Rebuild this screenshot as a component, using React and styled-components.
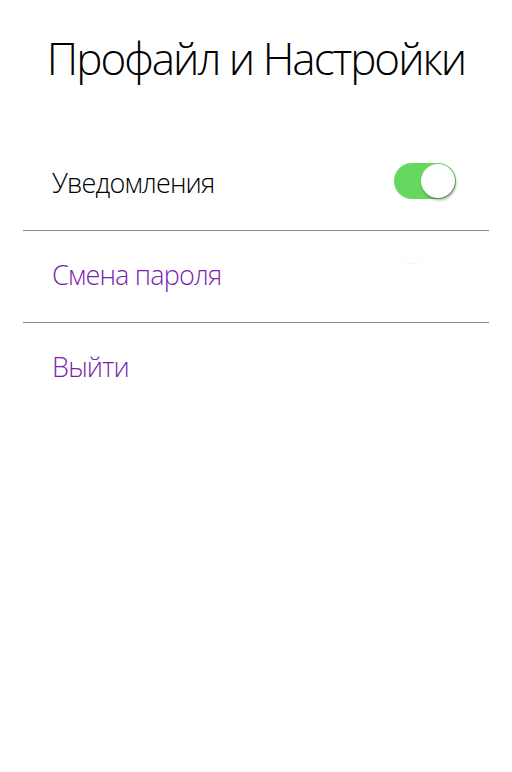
import React, { useState } from "react";
import styled, { createGlobalStyle } from "styled-components";

const Global = createGlobalStyle`
  html, body {
    margin: 0;
    padding: 0;
    background: #fff;
  }
  body {
    font-family: "Open Sans", "Noto Sans", sans-serif;
    font-weight: 300;
  }
`;

const Page = styled.div`
  width: 512px;
  min-height: 772px;
  background: #fff;
  box-sizing: border-box;
  padding: 28px 23px 0;
`;

const Title = styled.h1`
  margin: 0;
  text-align: center;
  font-size: 44px;
  font-weight: 300;
  letter-spacing: -2px;
  color: #000;
  line-height: 60px;
`;

const List = styled.div`
  margin-top: 51px;
  display: flex;
  flex-direction: column;
`;

const Row = styled.div`
  position: relative;
  height: 92px;
  display: flex;
  align-items: center;
  justify-content: space-between;
  padding: 0 33px 8px 29px;
  border-bottom: ${(p) => (p.$last ? "none" : "1px solid #8a8a8a")};
  box-sizing: border-box;
`;

const Label = styled.span`
  padding-top: 3px;
  font-size: 27px;
  font-weight: 300;
  letter-spacing: -0.8px;
  color: ${(p) => (p.$accent ? "#7b1fae" : "#000")};
  cursor: ${(p) => (p.$accent ? "pointer" : "default")};
`;

const Track = styled.button`
  position: relative;
  width: 62px;
  height: 36px;
  border: none;
  padding: 0;
  border-radius: 18px;
  background: ${(p) => (p.$on ? "#67d85f" : "#e5e5e5")};
  cursor: pointer;
  transition: background 0.2s;
`;

const Knob = styled.span`
  position: absolute;
  top: 1px;
  left: ${(p) => (p.$on ? "27px" : "1px")};
  width: 34px;
  height: 34px;
  border-radius: 50%;
  background: #fff;
  box-shadow: 1px 2px 3px rgba(0, 0, 0, 0.35);
  transition: left 0.2s;
`;

const Ghost = styled.span`
  position: absolute;
  right: 63px;
  top: 22px;
  width: 26px;
  height: 10px;
  border-radius: 0 0 13px 13px;
  box-shadow: 0 1px 1px rgba(0, 0, 0, 0.03);
`;

function Toggle() {
  const [on, setOn] = useState(true);
  return (
    <Track $on={on} onClick={() => setOn(!on)} aria-label="Уведомления">
      <Knob $on={on} />
    </Track>
  );
}

export default function App() {
  return (
    <Page>
      <Global />
      <Title>Профайл и Настройки</Title>
      <List>
        <Row>
          <Label>Уведомления</Label>
          <Toggle />
        </Row>
        <Row>
          <Ghost />
          <Label $accent>Смена пароля</Label>
        </Row>
        <Row $last>
          <Label $accent>Выйти</Label>
        </Row>
      </List>
    </Page>
  );
}
